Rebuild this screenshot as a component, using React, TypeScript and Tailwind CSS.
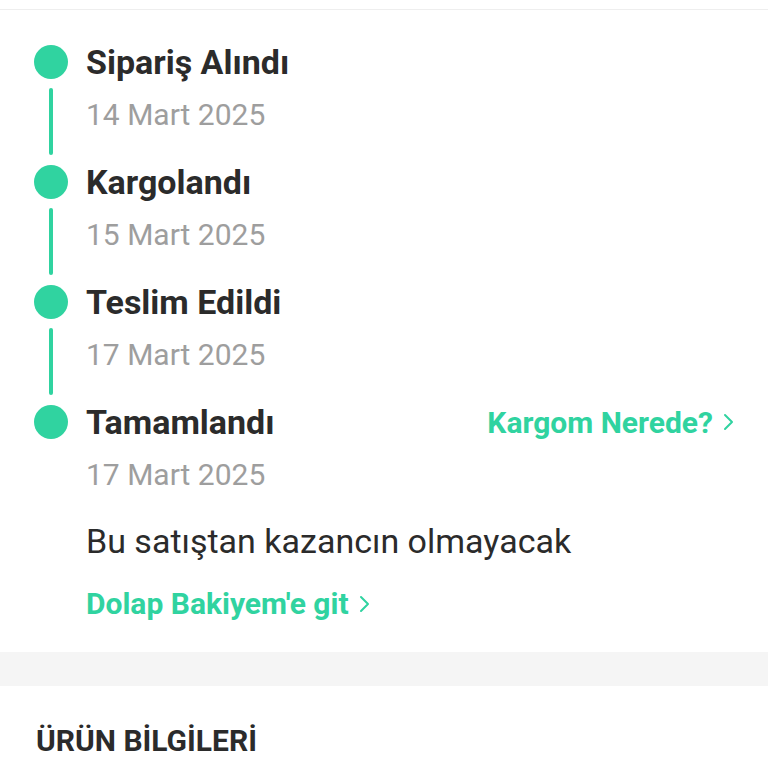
import type { ReactNode } from "react";

const steps = [
  { title: "Sipariş Alındı", date: "14 Mart 2025" },
  { title: "Kargolandı", date: "15 Mart 2025" },
  { title: "Teslim Edildi", date: "17 Mart 2025" },
];

function Chevron() {
  return (
    <svg width="11" height="18" viewBox="0 0 11 18" fill="none" className="ml-[10px] shrink-0">
      <path d="M2 2l7 7-7 7" stroke="#30d3a0" strokeWidth="2" strokeLinecap="round" strokeLinejoin="round" />
    </svg>
  );
}

function Step({ title, date, last, aside, children }: { title: string; date: string; last?: boolean; aside?: ReactNode; children?: ReactNode }) {
  return (
    <div className="flex">
      <div className="flex w-[34px] shrink-0 flex-col items-center">
        <div className="h-[34px] w-[34px] rounded-full bg-[#30d3a0]" />
        {!last ? <div className="mt-[9px] mb-[10px] w-1 flex-1 rounded-full bg-[#30d3a0]" /> : null}
      </div>
      <div className={`ml-[18px] flex-1 ${last ? "" : "pb-[32px]"}`}>
        <div className="flex h-[34px] items-center justify-between">
          <span className="text-[34px] font-bold leading-[34px] text-[#2b2b2b]">{title}</span>
          {aside}
        </div>
        <div className="mt-[18px] text-[30px] leading-[36px] text-[#9e9e9e]">{date}</div>
        {children}
      </div>
    </div>
  );
}

export default function App() {
  return (
    <div className="min-h-[768px] w-[768px] bg-white" style={{ fontFamily: "Roboto, 'Noto Sans', sans-serif" }}>
      <div className="h-[9px]" />
      <div className="h-px bg-[#eeeeee]" />
      <section className="pt-[35px] pr-[34px] pl-[34px]">
        {steps.map((s) => (
          <Step key={s.title} title={s.title} date={s.date} />
        ))}
        <Step
          title="Tamamlandı"
          date="17 Mart 2025"
          last
          aside={
            <span className="flex items-center text-[30px] font-bold text-[#30d3a0]">
              Kargom Nerede?
              <Chevron />
            </span>
          }
        >
          <div className="mt-[28px] text-[34px] leading-[40px] text-[#2b2b2b]">Bu satıştan kazancın olmayacak</div>
          <div className="mt-[27px] flex items-center text-[30px] font-bold leading-[32px] text-[#30d3a0]">
            Dolap Bakiyem'e git
            <Chevron />
          </div>
        </Step>
        <div className="h-[32px]" />
      </section>
      <div className="h-[34px] bg-[#f5f5f5]" />
      <div className="px-[36px] pt-[39px] text-[30px] font-bold leading-[32px] text-[#2b2b2b]">ÜRÜN BİLGİLERİ</div>
    </div>
  );
}
